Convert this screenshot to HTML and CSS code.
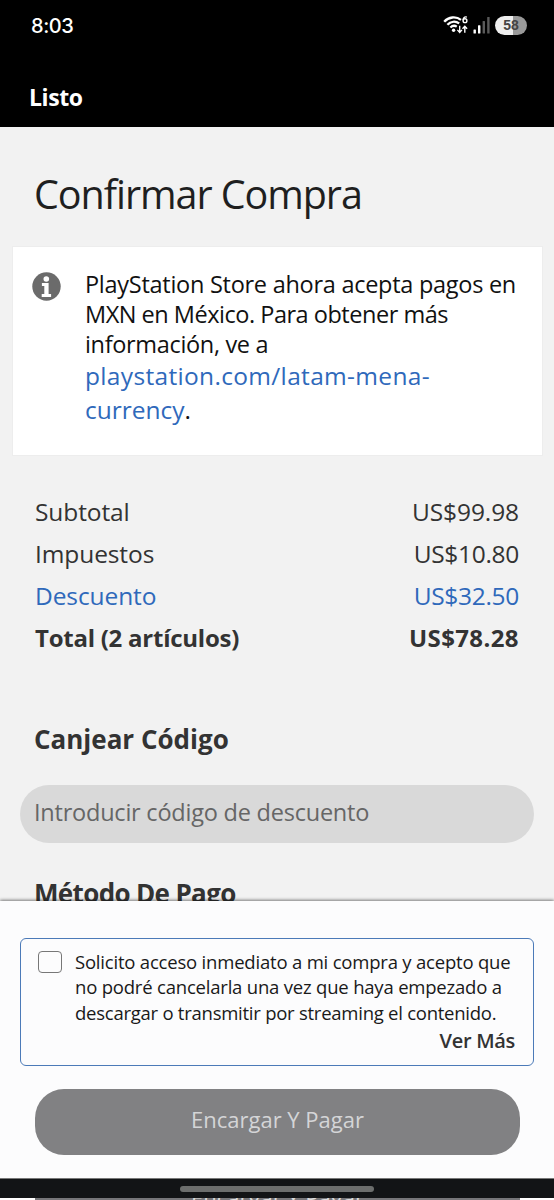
FILE: index.html
```
<!DOCTYPE html>
<html lang="es">
<head>
<meta charset="utf-8">
<title>Confirmar Compra</title>
<link rel="stylesheet" href="styles.css">
</head>
<body>
<div class="screen">
  <header class="top">
    <div class="status">
      <span class="clock">8:03</span>
      <div class="indicators">
        <svg class="wifi" width="26" height="20" viewBox="0 0 26 20" fill="none" stroke="#fff">
          <path d="M1.2 6.8C5.5 1.8 13 1 18 4.9" stroke-width="2.3"/>
          <path d="M4.4 9.8C7.7 6.2 12.5 5.8 16.2 8.4" stroke-width="2.3"/>
          <path d="M7.4 12.5C9.3 10.6 11.8 10.4 13.8 11.6" stroke-width="2.2"/>
          <circle cx="10.6" cy="15.2" r="1.7" fill="#fff" stroke="none"/>
          <path d="M16.7 10.8v6.5m-2.3-2.4 2.3 2.5 2.3-2.5M21.8 17.8v-6.5m-2.3 2.5 2.3-2.5 2.3 2.5" stroke-width="1.4"/>
          <path d="M23.9 2.2C21.6 1.3 20.1 2.7 20.1 5.2" stroke-width="1.4"/>
          <circle cx="22" cy="5.7" r="1.9" stroke-width="1.4"/>
        </svg>
        <svg class="signal" width="18" height="18" viewBox="0 0 18 18">
          <rect x="0.5" y="13.5" width="2.4" height="4" rx=".5" fill="#fff"/>
          <rect x="5" y="9.2" width="2.4" height="8.3" rx=".5" fill="#fff"/>
          <rect x="9.6" y="5" width="2.4" height="12.5" rx=".5" fill="#5a5a5a"/>
          <rect x="14.2" y="1" width="2.4" height="16.5" rx=".5" fill="#5a5a5a"/>
        </svg>
        <span class="battery">58</span>
      </div>
    </div>
    <div class="done">Listo</div>
  </header>

  <main class="content">
    <h1 class="title">Confirmar Compra</h1>
    <section class="notice">
      <svg class="info" width="29" height="29" viewBox="0 0 29 29">
        <circle cx="14.5" cy="14.5" r="14.2" fill="#6b6b6b"/>
        <circle cx="14.3" cy="7" r="2.8" fill="#fff"/>
        <path d="M9.9 11h6.7v11h2.5v3H9.7v-3h2.6v-8H9.9z" fill="#fff"/>
      </svg>
      <div class="notice-text">
        <div class="n1">PlayStation Store ahora acepta pagos en</div>
        <div class="n2">MXN en México. Para obtener más</div>
        <div class="n3">información, ve a</div>
        <div class="link-line n4"><span class="link">playstation.com/latam-mena-</span></div>
        <div class="link-line n5"><span class="link">currency</span>.</div>
      </div>
    </section>

    <dl class="summary">
      <div class="row"><dt>Subtotal</dt><dd>US$99.98</dd></div>
      <div class="row"><dt>Impuestos</dt><dd class="tight">US$10.80</dd></div>
      <div class="row discount"><dt>Descuento</dt><dd class="tight">US$32.50</dd></div>
      <div class="row total"><dt>Total (2 artículos)</dt><dd class="amount">US$78.28</dd></div>
    </dl>

    <h2 class="heading">Canjear Código</h2>
    <div class="code-field">Introducir código de descuento</div>
    <h2 class="heading payment">Método De Pago</h2>
  </main>

  <section class="sheet">
    <div class="consent">
      <span class="checkbox"></span>
      <div class="consent-body">
        <div class="c1">Solicito acceso inmediato a mi compra y acepto que</div>
        <div class="c2">no podré cancelarla una vez que haya empezado a</div>
        <div class="c3">descargar o transmitir por streaming el contenido.</div>
        <div class="more">Ver Más</div>
      </div>
    </div>
    <div class="pay">Encargar Y Pagar</div>
  </section>

  <div class="nav"><div class="handle"></div></div>
  <div class="under"><div class="under-button"><span>Encargar Y Pagar</span></div></div>
</div>
</body>
</html>
```

FILE: styles.css
```
* { box-sizing: border-box; }
body { margin: 0; font-family: "Open Sans", "Noto Sans", sans-serif; font-weight: 400; }
h1, h2, dl, dd { margin: 0; }

.screen {
  width: 554px;
  height: 1200px;
  overflow: hidden;
  display: flex;
  flex-direction: column;
  background: #f2f2f2;
  white-space: nowrap;
}

.top { height: 127px; flex: none; background: #000; color: #fff; }
.status {
  display: flex;
  justify-content: space-between;
  padding: 13px 27px 0 31px;
  height: 76px;
}
.clock { font: 500 20px/26px Inter, sans-serif; letter-spacing: -0.4px; }
.indicators { display: flex; align-items: flex-start; }
.wifi { margin: 2px 4px 0 0; }
.signal { margin: 3px 4px 0 0; }
.battery {
  width: 32px;
  height: 19px;
  margin-top: 3px;
  border-radius: 10px;
  background: linear-gradient(90deg, #eee 56%, #999 56%);
  color: #444;
  font: 700 14px/19px "Liberation Sans", sans-serif;
  text-align: center;
}
.done { padding-left: 29px; font-weight: 700; font-size: 23px; line-height: 42px; letter-spacing: -0.4px; }

.content { height: 774px; flex: none; overflow: hidden; }
.title {
  padding: 39px 0 0 34px;
  height: 120px;
  font-weight: 400;
  font-size: 39.5px;
  line-height: 56px;
  letter-spacing: -1.05px;
  color: #1f1f1f;
}
.notice {
  margin: 0 12px 0 13px;
  height: 208px;
  padding: 22px 0 0 19px;
  display: flex;
  background: #fff;
  box-shadow: 0 0 0 1px #ededed;
  color: #111;
}
.info { margin-top: 3px; }
.notice-text { padding-left: 24px; font-size: 23.5px; line-height: 30px; }
.link-line { font-size: 24.5px; line-height: 34px; }
.link { color: #2f69bb; }
.n1 { letter-spacing: -0.27px; }
.n2 { letter-spacing: -0.48px; }
.n3 { letter-spacing: -0.33px; }
.n4 { letter-spacing: 0.33px; }
.n5 { letter-spacing: 0; }

.summary { height: 204px; padding: 36px 35px 0 35px; color: #333; }
.row { display: flex; justify-content: space-between; font-size: 24.5px; line-height: 42px; letter-spacing: -0.1px; }
.tight { letter-spacing: -0.3px; }
.discount { color: #2f69bb; }
.total { font-size: 24px; font-weight: 700; letter-spacing: -0.25px; }
.amount { letter-spacing: 0.4px; }

.heading {
  padding: 62px 0 0 34px;
  font-weight: 700;
  font-size: 26px;
  line-height: 36px;
  color: #333;
}
.code-field {
  margin: 28px 20px 0;
  height: 58px;
  padding: 12px 0 0 14px;
  border-radius: 29px;
  background: #d9d9d9;
  color: #666;
  font-size: 23.5px;
  line-height: 30px;
  letter-spacing: -0.22px;
}
.payment { padding-top: 32px; letter-spacing: -0.65px; }

.sheet {
  position: relative;
  height: 277px;
  flex: none;
  padding: 37px 20px 0;
  background: #fcfcfd;
  box-shadow: 0 -1px 3px rgba(0, 0, 0, 0.5);
}
.consent {
  height: 128px;
  display: flex;
  padding: 10px 17px 0 17px;
  border: 1px solid #4b7ab8;
  border-radius: 6px;
  color: #191919;
}
.checkbox {
  width: 24px;
  height: 22px;
  flex: none;
  margin: 2px 13px 0 0;
  border: 1px solid #777;
  border-radius: 4px;
}
.consent-body { flex: 1; font-size: 18.5px; line-height: 25.3px; }
.c1 { letter-spacing: -0.2px; }
.c2 { letter-spacing: -0.2px; }
.c3 { letter-spacing: -0.25px; }
.more { padding: 1px 1px 0 0; text-align: right; font-size: 20px; font-weight: 600; line-height: 30px; color: #333; letter-spacing: -0.3px; }
.pay {
  margin: 23px 14px 0 15px;
  height: 66px;
  border-radius: 29px;
  background: #818183;
  color: #d4d5d7;
  font-size: 22px;
  font-weight: 500;
  line-height: 61px;
  text-align: center;
}

.nav {
  position: relative;
  height: 20px;
  flex: none;
  padding: 7px 0 0 180px;
  border-top: 1px solid #777;
  background: #121416;
}
.handle { width: 194px; height: 6px; border-radius: 3px; background: #6c6e6d; }
.under { height: 2px; flex: none; overflow: hidden; background: #fff; }
.under-button {
  width: 485px;
  height: 2px;
  margin-left: 35px;
  overflow: hidden;
  background: #77777a;
  color: #ddd;
  text-align: center;
  font-size: 22px;
  line-height: 30px;
}
.under-button span { display: block; margin-top: -16px; }
```
